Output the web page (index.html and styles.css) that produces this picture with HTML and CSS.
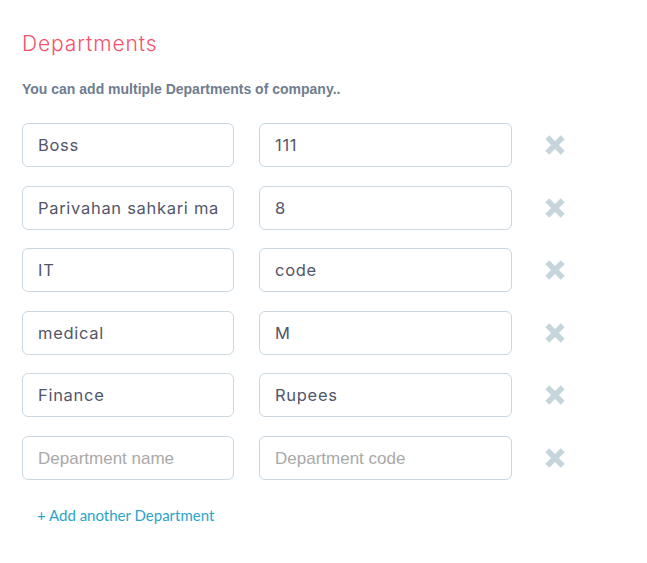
FILE: index.html
```html
<!DOCTYPE html>
<html lang="en">
<head>
    <meta charset="UTF-8">
    <meta name="viewport" content="width=device-width, initial-scale=1.0">
    <title>Departments</title>
    <link rel="stylesheet" href="styles.css">
</head>
<body>
    <div class="section">
        <h2 class="title">Departments</h2>
        <p class="hint">You can add multiple Departments of company..</p>

        <div class="dept-list">
            <div class="dept-row">
                <input type="text" class="dept-name" value="Boss" placeholder="Department name">
                <input type="text" class="dept-code" value="111" placeholder="Department code">
                <button class="remove" title="Remove"><svg viewBox="0 0 20 20"><path d="M3 3 17 17M17 3 3 17"/></svg></button>
            </div>
            <div class="dept-row">
                <input type="text" class="dept-name" value="Parivahan sahkari mandal" placeholder="Department name">
                <input type="text" class="dept-code" value="8" placeholder="Department code">
                <button class="remove" title="Remove"><svg viewBox="0 0 20 20"><path d="M3 3 17 17M17 3 3 17"/></svg></button>
            </div>
            <div class="dept-row">
                <input type="text" class="dept-name" value="IT" placeholder="Department name">
                <input type="text" class="dept-code" value="code" placeholder="Department code">
                <button class="remove" title="Remove"><svg viewBox="0 0 20 20"><path d="M3 3 17 17M17 3 3 17"/></svg></button>
            </div>
            <div class="dept-row">
                <input type="text" class="dept-name" value="medical" placeholder="Department name">
                <input type="text" class="dept-code" value="M" placeholder="Department code">
                <button class="remove" title="Remove"><svg viewBox="0 0 20 20"><path d="M3 3 17 17M17 3 3 17"/></svg></button>
            </div>
            <div class="dept-row">
                <input type="text" class="dept-name" value="Finance" placeholder="Department name">
                <input type="text" class="dept-code" value="Rupees" placeholder="Department code">
                <button class="remove" title="Remove"><svg viewBox="0 0 20 20"><path d="M3 3 17 17M17 3 3 17"/></svg></button>
            </div>
            <div class="dept-row">
                <input type="text" class="dept-name" placeholder="Department name">
                <input type="text" class="dept-code" placeholder="Department code">
                <button class="remove" title="Remove"><svg viewBox="0 0 20 20"><path d="M3 3 17 17M17 3 3 17"/></svg></button>
            </div>
        </div>

        <a href="#" class="add-link">+ Add another Department</a>
    </div>
</body>
</html>
```

FILE: styles.css
```css
body {
    margin: 0;
    background: #fff;
    font-family: Inter, "Noto Sans", sans-serif;
}
.section {
    padding: 30px 22px;
}
.title {
    margin: 0;
    font-size: 21px;
    font-weight: 300;
    letter-spacing: 0.9px;
    color: #f4516c;
    line-height: 28px;
}
.hint {
    margin: 23px 0 26px;
    font-family: "Liberation Sans", Arial, sans-serif;
    font-size: 14px;
    font-weight: bold;
    color: #6f7d8f;
}
.dept-list {
    display: flex;
    flex-direction: column;
    gap: 18.6px;
}
.dept-row {
    display: flex;
    align-items: center;
}
.dept-row input {
    box-sizing: border-box;
    height: 44px;
    padding: 0 15px;
    border: 1px solid #c9d7e0;
    border-radius: 6px;
    font-family: Inter, "Noto Sans", sans-serif;
    font-size: 16.5px;
    letter-spacing: 0.7px;
    color: #525669;
    outline: none;
}
.dept-row input::placeholder {
    font-family: "Liberation Sans", Arial, sans-serif;
    font-size: 17px;
    letter-spacing: 0;
    color: #a9a9a9;
}
.dept-name {
    width: 212px;
}
.dept-code {
    width: 253px;
    margin-left: 25px;
}
.remove {
    display: flex;
    margin-left: 32px;
    padding: 0;
    border: none;
    background: none;
    cursor: pointer;
}
.remove svg {
    width: 22px;
    height: 22px;
    fill: none;
    stroke: #c6d4db;
    stroke-width: 5;
}
.add-link {
    display: inline-block;
    margin: 26px 0 0 15px;
    font-family: Lato, sans-serif;
    font-size: 15px;
    color: #2ba4c8;
    text-decoration: none;
}
```
